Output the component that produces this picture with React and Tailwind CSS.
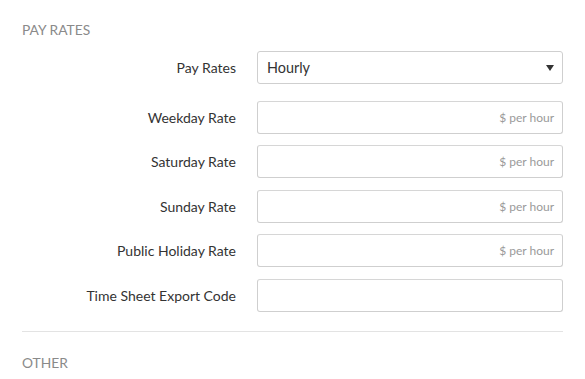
import React from 'react'

const RATE_ROWS = [
  { label: 'Weekday Rate', mt: 'mt-[17px]', unit: true },
  { label: 'Saturday Rate', mt: 'mt-[11px]', unit: true },
  { label: 'Sunday Rate', mt: 'mt-[12px]', unit: true },
  { label: 'Public Holiday Rate', mt: 'mt-[11px]', unit: true },
  { label: 'Time Sheet Export Code', mt: 'mt-[12px]', unit: false },
]

function Row({ label, className = '', children }) {
  return (
    <div className={`flex items-center ${className}`}>
      <label className="w-[214px] shrink-0 text-right text-[14px] leading-[18px] text-[#333]">{label}</label>
      <div className="ml-[21px] flex-1">{children}</div>
    </div>
  )
}

export default function App() {
  return (
    <div
      className="min-h-screen bg-white px-[22px] pt-[22px]"
      style={{ fontFamily: 'Lato, "Open Sans", sans-serif' }}
    >
      {/* Pay rates section */}
      <h2 className="text-[13.8px] leading-[16px] uppercase text-[#8a8a8a]">Pay Rates</h2>

      <div className="mt-[13px]">
        <Row label="Pay Rates">
          <div className="relative h-[33px] rounded-[3px] border border-[#cfcfcf] bg-white flex items-center pl-[9px] pr-[9px]">
            <span className="text-[14.4px] text-[#333]">Hourly</span>
            <svg className="absolute right-[8px] top-[13px]" width="8" height="6" viewBox="0 0 8 6">
              <path d="M0 0 H8 L4 6 Z" fill="#333" />
            </svg>
          </div>
        </Row>

        {RATE_ROWS.map((r) => (
          <Row key={r.label} label={r.label} className={r.mt}>
            <div className="h-[33px] rounded-[3px] border border-[#cfcfcf] border-t-[#d6d6d6] bg-white flex items-center justify-end pr-[8px]">
              {r.unit && <span className="text-[12px] text-[#9a9a9a]">$ per hour</span>}
            </div>
          </Row>
        ))}
      </div>

      <div className="mt-[19px] border-t border-[#e3e3e3]" />

      <h2 className="mt-[23px] text-[13.8px] leading-[16px] uppercase text-[#8a8a8a]">Other</h2>
    </div>
  )
}
